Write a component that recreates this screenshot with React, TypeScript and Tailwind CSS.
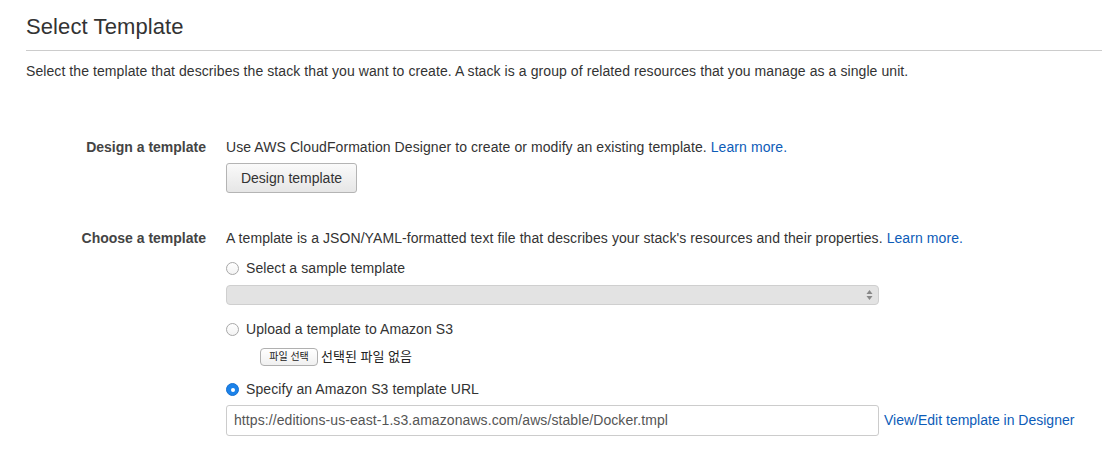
import React from 'react';

const font = { fontFamily: '"Liberation Sans", Arial, "Noto Sans CJK KR", sans-serif' };

const Radio = ({ checked, label }: { checked?: boolean; label: string }) => (
  <label className="flex h-5 items-center text-[14px] tracking-[0.08px] text-[#333]">
    {checked ? (
      <span className="mr-[7px] flex h-[13px] w-[13px] items-center justify-center rounded-full bg-[#1b82ea] border border-[#1670d0]">
        <span className="h-[4px] w-[4px] rounded-full bg-white" />
      </span>
    ) : (
      <span className="mr-[7px] h-[13px] w-[13px] rounded-full border border-[#a8a8a8] bg-gradient-to-b from-white to-[#f3f3f3]" />
    )}
    {label}
  </label>
);

const Row = ({ label, children, className }: { label: string; children: React.ReactNode; className?: string }) => (
  <div className={`flex ${className ?? ''}`}>
    <div className="w-[180px] shrink-0 text-right text-[14px] leading-5 font-bold text-[#444]">{label}</div>
    <div className="ml-[20px] flex flex-col">{children}</div>
  </div>
);

export default function App() {
  return (
    <div className="min-h-[473px] bg-white pl-[26px]" style={font}>
      <h1 className="pt-[13px] text-[22px] leading-[28px] tracking-[0.1px] text-[#333]">Select Template</h1>
      <div className="mt-[9px] h-px bg-[#cccccc]" />
      <p className="mt-[10px] text-[14px] leading-5 tracking-[0.08px] text-[#333]">
        Select the template that describes the stack that you want to create. A stack is a group of related resources that you manage as a single unit.
      </p>

      <Row label="Design a template" className="mt-[56px]">
        <p className="text-[14px] leading-5 tracking-[0.08px] text-[#333]">
          Use AWS CloudFormation Designer to create or modify an existing template.{' '}
          <a className="text-[#0d5cb8]">Learn more.</a>
        </p>
        <button className="mt-[6px] h-[30px] w-[131px] rounded-[3px] border border-[#b4b4b4] bg-gradient-to-b from-[#fafafa] to-[#e6e6e6] text-[14px] text-[#333]">
          Design template
        </button>
      </Row>

      <Row label="Choose a template" className="mt-[35px]">
        <p className="text-[14px] leading-5 tracking-[0.08px] text-[#333]">
          A template is a JSON/YAML-formatted text file that describes your stack's resources and their properties.{' '}
          <a className="text-[#0d5cb8]">Learn more.</a>
        </p>
        <div className="mt-[10px]">
          <Radio label="Select a sample template" />
        </div>
        <div className="relative mt-[7px] h-[20px] w-[653px] rounded-[4px] border border-[#cfcfcf] bg-[#e3e3e3]">
          <svg className="absolute right-[5px] top-[3px]" width="7" height="12" viewBox="0 0 7 12">
            <path d="M3.5 1 L6.5 5 L0.5 5 Z" fill="#888" />
            <path d="M3.5 11 L6.5 7 L0.5 7 Z" fill="#888" />
          </svg>
        </div>
        <div className="mt-[14px]">
          <Radio label="Upload a template to Amazon S3" />
        </div>
        <div className="mt-[8px] ml-[34px] flex items-center">
          <span className="flex h-[18px] w-[58px] items-center justify-center rounded-[4px] border border-[#b0b0b0] bg-gradient-to-b from-white to-[#f0f0f0] text-[10px] text-[#222]">
            파일 선택
          </span>
          <span className="ml-[3px] text-[13px] text-[#222]">선택된 파일 없음</span>
        </div>
        <div className="mt-[13px]">
          <Radio checked label="Specify an Amazon S3 template URL" />
        </div>
        <div className="mt-[5px] flex items-center">
          <div className="flex h-[31px] w-[653px] items-center rounded-[3px] border border-[#cccccc] pl-[7px] text-[14px] tracking-[0.08px] text-[#555]">
            https://editions-us-east-1.s3.amazonaws.com/aws/stable/Docker.tmpl
          </div>
          <a className="ml-[5px] whitespace-nowrap text-[14px] text-[#0d5cb8]">View/Edit template in Designer</a>
        </div>
      </Row>
    </div>
  );
}
